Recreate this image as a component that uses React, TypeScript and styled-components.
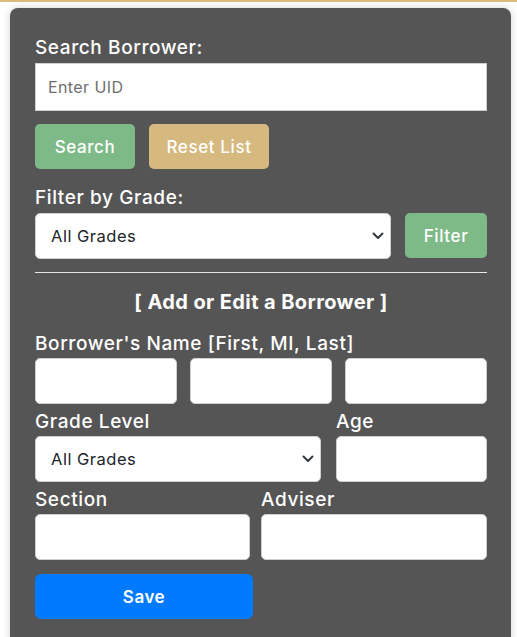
import React from "react";
import styled, { createGlobalStyle } from "styled-components";

const Global = createGlobalStyle`
  html, body { margin: 0; padding: 0; background: #ffffff; }
  body { font-family: "Inter", "Noto Sans", sans-serif; }
  * { box-sizing: border-box; }
`;

const TopLine = styled.div`
  height: 2px;
  background: #dcbc7c;
`;

const Panel = styled.div`
  margin: 6px 6px 0 10px;
  background: #555555;
  border-radius: 8px 8px 0 0;
  box-shadow: 0 0 8px rgba(0, 0, 0, 0.18);
  padding: 26px 24px 30px 25px;
  color: #ffffff;
  min-height: 640px;
`;

const Label = styled.label`
  display: block;
  font-size: 19px;
  letter-spacing: 0.6px;
  font-weight: 500;
  line-height: 27px;
  height: 27px;
  white-space: nowrap;
  color: #ffffff;
`;

const SearchInput = styled.input`
  display: block;
  width: 100%;
  height: 48px;
  margin-top: 2px;
  border: 1px solid #cfcfcf;
  border-radius: 0;
  padding: 0 12px;
  font-family: inherit;
  font-size: 16px;
  letter-spacing: 0.4px;
  background: #fff;
  &::placeholder { color: #6f6f6f; }
`;

const ButtonRow = styled.div`
  display: flex;
  gap: 14px;
  margin-top: 13px;
  margin-bottom: 15px;
`;

const Btn = styled.button<{ $bg: string; $w?: number }>`
  height: 45px;
  width: ${(p) => (p.$w ? `${p.$w}px` : "auto")};
  padding: 0;
  border: none;
  border-radius: 5px;
  background: ${(p) => p.$bg};
  color: #ffffff;
  font-family: inherit;
  font-size: 17px;
  letter-spacing: 0.6px;
  font-weight: 500;
  flex: none;
`;

const FilterRow = styled.div`
  display: flex;
  gap: 14px;
  margin-top: 2px;
`;

const SelectWrap = styled.div<{ $w?: number }>`
  position: relative;
  flex: ${(p) => (p.$w ? "none" : "1")};
  width: ${(p) => (p.$w ? `${p.$w}px` : "auto")};
`;

const Select = styled.select`
  display: block;
  width: 100%;
  height: 46px;
  appearance: none;
  -webkit-appearance: none;
  border: 1px solid #cfcfcf;
  border-radius: 5px;
  background: #fff;
  padding: 0 36px 0 15px;
  font-family: inherit;
  font-size: 16.5px;
  letter-spacing: 0.5px;
  color: #212529;
`;

const Chevron = styled.svg`
  position: absolute;
  right: 7px;
  top: 50%;
  margin-top: -4px;
  width: 12px;
  height: 8px;
  pointer-events: none;
`;

const Divider = styled.hr`
  border: none;
  border-top: 1px solid #e6e6e6;
  margin: 13px 0 0;
`;

const Heading = styled.h3`
  margin: 15px 0 14px;
  text-align: center;
  font-size: 20px;
  letter-spacing: 0.4px;
  font-weight: 700;
  line-height: 28px;
  color: #ffffff;
`;

const Field = styled.input`
  display: block;
  width: 100%;
  height: 46px;
  border: 1px solid #cfcfcf;
  border-radius: 5px;
  background: #fff;
  padding: 0 12px;
  font-family: inherit;
  font-size: 15px;
`;

const Grid = styled.div<{ $cols: string; $gap: number }>`
  display: grid;
  grid-template-columns: ${(p) => p.$cols};
  column-gap: ${(p) => p.$gap}px;
  row-gap: 1px;
  margin-bottom: 4px;
`;

const SaveBtn = styled.button`
  display: block;
  margin-top: 14px;
  width: 218px;
  height: 45px;
  border: none;
  border-radius: 6px;
  background: #007bff;
  color: #fff;
  font-family: inherit;
  font-size: 17px;
  letter-spacing: 0.5px;
  font-weight: 600;
`;

const ChevronIcon = () => (
  <Chevron viewBox="0 0 12 8">
    <path d="M1.5 1.5 L6 6 L10.5 1.5" fill="none" stroke="#343a40" strokeWidth="2" strokeLinecap="round" strokeLinejoin="round" />
  </Chevron>
);

export default function App() {
  return (
    <>
      <Global />
      <TopLine />
      <Panel>
        <Label>Search Borrower:</Label>
        <SearchInput placeholder="Enter UID" />
        <ButtonRow>
          <Btn $bg="#7dba88" $w={100}>Search</Btn>
          <Btn $bg="#d5b97e" $w={120}>Reset List</Btn>
        </ButtonRow>
        <Label>Filter by Grade:</Label>
        <FilterRow>
          <SelectWrap>
            <Select defaultValue="all">
              <option value="all">All Grades</option>
            </Select>
            <ChevronIcon />
          </SelectWrap>
          <Btn $bg="#7dba88" $w={82}>Filter</Btn>
        </FilterRow>
        <Divider />
        <Heading>[ Add or Edit a Borrower ]</Heading>
        <Grid $cols="1fr 1fr 1fr" $gap={13}>
          <Label style={{ gridColumn: "1 / 4" }}>Borrower's Name [First, MI, Last]</Label>
          <Field />
          <Field />
          <Field />
        </Grid>
        <Grid $cols="286px 1fr" $gap={15}>
          <Label>Grade Level</Label>
          <Label>Age</Label>
          <SelectWrap>
            <Select defaultValue="all">
              <option value="all">All Grades</option>
            </Select>
            <ChevronIcon />
          </SelectWrap>
          <Field />
        </Grid>
        <Grid $cols="215px 1fr" $gap={11}>
          <Label>Section</Label>
          <Label>Adviser</Label>
          <Field />
          <Field />
        </Grid>
        <SaveBtn>Save</SaveBtn>
      </Panel>
    </>
  );
}
